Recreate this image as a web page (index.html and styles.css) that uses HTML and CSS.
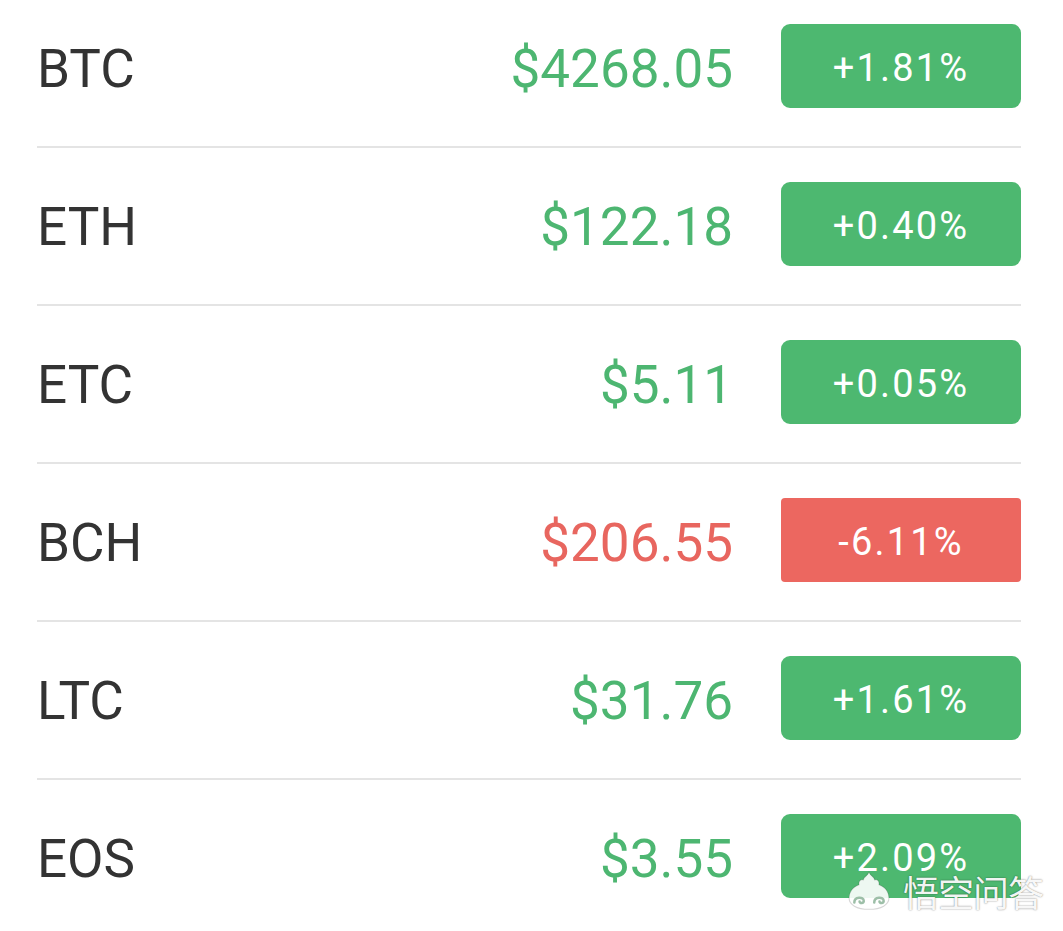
FILE: index.html
```html
<!DOCTYPE html>
<html lang="zh">
<head>
<meta charset="utf-8">
<title>Coins</title>
<link rel="stylesheet" href="styles.css">
</head>
<body>
<div class="list">
  <div class="row">
    <span class="sym">BTC</span>
    <span class="price up">$4268.05</span>
    <span class="badge up">+1.81%</span>
  </div>
  <div class="row">
    <span class="sym">ETH</span>
    <span class="price up">$122.18</span>
    <span class="badge up">+0.40%</span>
  </div>
  <div class="row">
    <span class="sym">ETC</span>
    <span class="price up">$5.11</span>
    <span class="badge up">+0.05%</span>
  </div>
  <div class="row">
    <span class="sym">BCH</span>
    <span class="price down">$206.55</span>
    <span class="badge down">-6.11%</span>
  </div>
  <div class="row">
    <span class="sym">LTC</span>
    <span class="price up">$31.76</span>
    <span class="badge up">+1.61%</span>
  </div>
  <div class="row last">
    <span class="sym">EOS</span>
    <span class="price up">$3.55</span>
    <span class="badge up">+2.09%</span>
  </div>
</div>
<div class="watermark">
  <svg class="wm-logo" width="44" height="40" viewBox="0 0 42 38">
    <path d="M21 1 C22.5 5 25.5 4.5 26.5 8.5 C29.5 7.5 31 10.5 30.5 13 C36.5 15 40 20 40 26 C40 32 33 36.5 21 36.5 C9 36.5 2 32 2 26 C2 20 5.5 15 11.5 13 C11 10.5 12.5 7.5 15.5 8.5 C16.5 4.5 19.5 5 21 1 Z" fill="rgba(255,255,255,0.9)" stroke="rgba(0,0,0,0.16)" stroke-width="1"/>
    <path d="M7 30 C7 24.5 16 24 16 28.5 C16 31 12 31 12 29" fill="none" stroke="#9dbfa8" stroke-width="2.4" stroke-linecap="round"/>
    <path d="M26 30 C26 24.5 35 24 35 28.5 C35 31 31 31 31 29" fill="none" stroke="#9dbfa8" stroke-width="2.4" stroke-linecap="round"/>
  </svg>
  <span class="wm-text">悟空问答</span>
</div>
</body>
</html>
```
FILE: styles.css
```css
html, body {
  margin: 0;
  padding: 0;
  background: #ffffff;
}

body {
  font-family: Roboto, "Noto Sans", "Liberation Sans", sans-serif;
  position: relative;
  width: 1063px;
  height: 931px;
  overflow: hidden;
}

.list {
  margin-top: -10px;
  padding: 0 42px 0 37px;
}

.row {
  display: flex;
  align-items: center;
  padding: 34px 0 38px;
  border-bottom: 2px solid #e4e4e4;
}

.row.last {
  border-bottom: none;
}

.sym {
  font-size: 53px;
  color: #333333;
  padding-top: 5px;
}

.price {
  margin-left: auto;
  font-size: 53px;
  padding-top: 5px;
}

.price.up {
  color: #4db671;
}

.price.down {
  color: #e8665f;
}

.badge {
  width: 240px;
  height: 84px;
  margin-left: 48px;
  display: flex;
  align-items: center;
  justify-content: center;
  font-size: 38px;
  letter-spacing: 2.2px;
  color: #ffffff;
  border-radius: 9px;
  padding-top: 4px;
  box-sizing: border-box;
}

.badge.up {
  background: #4db870;
}

.badge.down {
  background: #ec6760;
  border-radius: 4px;
}

.watermark {
  position: absolute;
  left: 847px;
  top: 871px;
  display: flex;
  align-items: center;
  gap: 12px;
}

.wm-logo {
  display: block;
}

.wm-text {
  font-family: "Noto Sans CJK SC", sans-serif;
  font-size: 36px;
  line-height: 40px;
  letter-spacing: -1px;
  color: rgba(255, 255, 255, 0.94);
  text-shadow: 0 0 2px rgba(0, 0, 0, 0.35), 0 0 1px rgba(0, 0, 0, 0.25);
}
```
